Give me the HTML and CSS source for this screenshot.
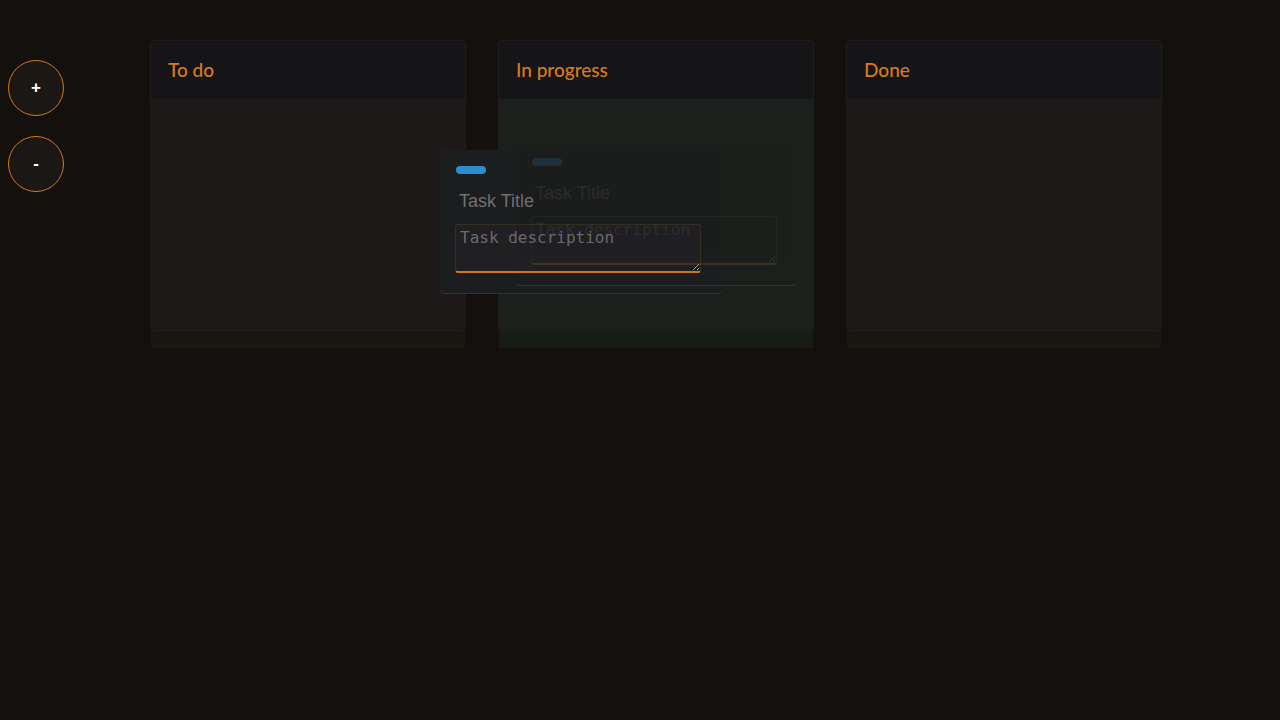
FILE: index.html
```html
<!DOCTYPE html>
<html lang="en">
<head>
<meta charset="utf-8">
<title>Kanban</title>
<link rel="stylesheet" href="styles.css">
</head>
<body>
  <aside class="tools">
    <button class="round-btn">+</button>
    <button class="round-btn">-</button>
  </aside>
  <main class="board">
    <section class="column">
      <div class="panel">
        <header class="col-header">To do</header>
        <div class="col-body"></div>
      </div>
      <div class="strip"></div>
    </section>
    <section class="column column-over">
      <div class="panel">
        <header class="col-header">In progress</header>
        <div class="col-body">
          <div class="card card-placeholder">
            <div class="pill"></div>
            <input class="title-input" placeholder="Task Title">
            <textarea class="desc" placeholder="Task description"></textarea>
          </div>
        </div>
      </div>
      <div class="strip"></div>
    </section>
    <section class="column">
      <div class="panel">
        <header class="col-header">Done</header>
        <div class="col-body"></div>
      </div>
      <div class="strip"></div>
    </section>
  </main>
  <div class="card card-drag">
    <div class="pill"></div>
    <input class="title-input" placeholder="Task Title">
    <textarea class="desc" placeholder="Task description"></textarea>
  </div>
</body>
</html>
```

FILE: styles.css
```css
html, body {
  height: 100%;
}
body {
  margin: 0;
  background: #13100e;
  display: flex;
  align-items: flex-start;
  font-family: "Lato", "Noto Sans", sans-serif;
}
.tools {
  display: flex;
  flex-direction: column;
  gap: 20px;
  padding: 60px 0 0 8px;
}
.round-btn {
  width: 56px;
  height: 56px;
  border-radius: 50%;
  border: 1px solid #d27a1c;
  background: #1a1715;
  color: #ffffff;
  font-family: "Liberation Sans", Arial, sans-serif;
  font-size: 17px;
  font-weight: 700;
  padding: 0;
  display: flex;
  align-items: center;
  justify-content: center;
}
.board {
  display: flex;
  gap: 32px;
  margin-left: 86px;
  padding-top: 40px;
}
.column {
  width: 316px;
  display: flex;
  flex-direction: column;
}
.panel {
  border: 1px solid #211f1e;
  border-radius: 4px;
  overflow: hidden;
}
.col-header {
  height: 58px;
  background: #151518;
  color: #d97b1c;
  font-size: 19px;
  font-weight: 500;
  display: flex;
  align-items: center;
  padding: 0 17px 2px;
  box-sizing: border-box;
}
.col-body {
  height: 231px;
  background: #1c1918;
  padding: 42px 15px 0 16px;
  box-sizing: border-box;
}
.strip {
  height: 17px;
  margin: 0 1px;
  background: #1a1611;
}
.column-over .col-body {
  background: #1b201c;
}
.column-over .strip {
  background: #171d15;
}
.card {
  width: 282px;
  box-sizing: border-box;
  padding: 16px 16px 20px 15px;
  background: #1c1d1e;
  border-radius: 4px;
  border-bottom: 1px solid rgba(217, 123, 28, 0.2);
  display: flex;
  flex-direction: column;
}
.card-placeholder {
  position: relative;
  z-index: 2;
  opacity: 0.17;
  background: rgba(40, 40, 40, 0.15);
  border: 1px solid rgba(70, 70, 70, 0.4);
  border-bottom: 1px solid #e8902e;
}
.card-placeholder .desc {
  background: transparent;
  border-color: rgba(140, 140, 140, 0.45);
  border-bottom-color: #e8902e;
}
.card-drag {
  position: absolute;
  z-index: 1;
  left: 440px;
  top: 150px;
}
.pill {
  width: 30px;
  height: 8px;
  border-radius: 4px;
  background: #2f8ccf;
  margin-left: 1px;
  margin-bottom: 12px;
}
.title-input {
  height: 30px;
  box-sizing: border-box;
  border: none;
  outline: none;
  background: transparent;
  padding: 0 4px;
  font-family: "Liberation Sans", Arial, sans-serif;
  font-size: 18px;
  color: #cfcfcf;
  margin-bottom: 8px;
}
.title-input::placeholder {
  color: #707070;
}
.desc {
  width: 246px;
  height: 49px;
  box-sizing: border-box;
  margin: 0;
  padding: 3px 4px;
  background: #202023;
  border: 1px solid rgba(160, 110, 50, 0.18);
  border-bottom: 2px solid #d07a1e;
  border-radius: 3px;
  outline: none;
  font-family: "DejaVu Sans Mono", monospace;
  font-size: 16px;
  color: #cfcfcf;
}
.desc::placeholder {
  color: #6b6b6b;
}
```
